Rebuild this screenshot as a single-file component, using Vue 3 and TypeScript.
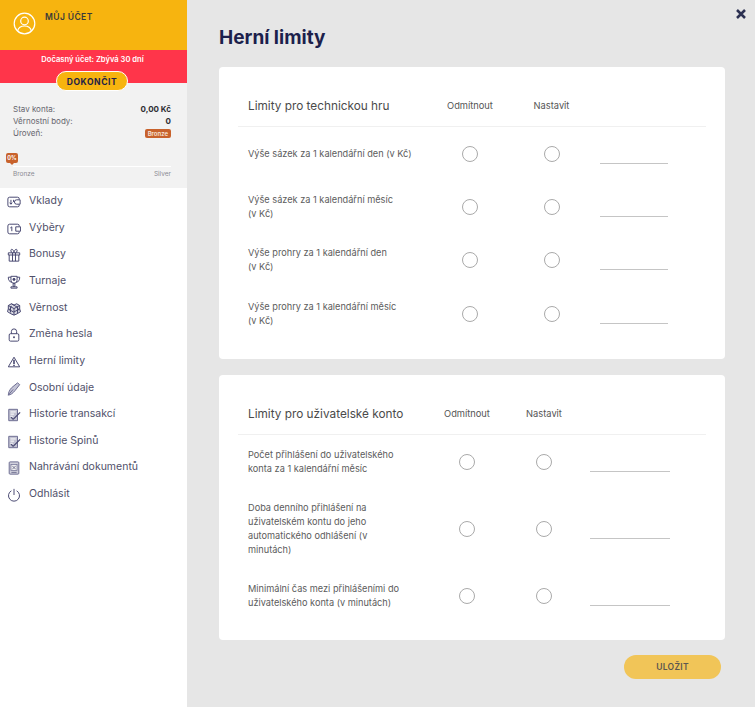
<script setup lang="ts">
const menu = [
  { label: 'Vklady', icon: 'deposit' },
  { label: 'Výběry', icon: 'withdraw' },
  { label: 'Bonusy', icon: 'gift' },
  { label: 'Turnaje', icon: 'trophy' },
  { label: 'Věrnost', icon: 'loyalty' },
  { label: 'Změna hesla', icon: 'lock' },
  { label: 'Herní limity', icon: 'warn' },
  { label: 'Osobní údaje', icon: 'pen' },
  { label: 'Historie transakcí', icon: 'hist' },
  { label: 'Historie Spinů', icon: 'hist' },
  { label: 'Nahrávání dokumentů', icon: 'doc' },
  { label: 'Odhlásit', icon: 'power' },
]
const tech = [
  { label: ['Výše sázek za 1 kalendářní den (v Kč)'], h: 53 },
  { label: ['Výše sázek za 1 kalendářní měsíc', '(v Kč)'], h: 53 },
  { label: ['Výše prohry za 1 kalendářní den', '(v Kč)'], h: 54 },
  { label: ['Výše prohry za 1 kalendářní měsíc', '(v Kč)'], h: 53 },
]
const user = [
  { label: ['Počet přihlášení do uživatelského', 'konta za 1 kalendářní měsíc'], h: 54 },
  { label: ['Doba denního přihlášení na', 'uživatelském kontu do jeho', 'automatického odhlášení (v', 'minutách)'], h: 80 },
  { label: ['Minimální čas mezi přihlášeními do', 'uživatelského konta (v minutách)'], h: 54 },
]
</script>

<template>
  <div class="page">
    <aside class="side">
      <div class="acct">
        <svg class="avatar" width="23" height="23" viewBox="0 0 23 23" fill="none" stroke="#fff" stroke-width="1.2">
          <circle cx="11.5" cy="11.5" r="10.3" />
          <circle cx="11.5" cy="9" r="3.8" />
          <path d="M4.6 19c.8-3.4 3.4-5 6.9-5s6.100 1.600 6.900 5" />
        </svg>
        <span class="acct-t">MŮJ ÚČET</span>
      </div>
      <div class="temp"><span>Dočasný účet: Zbývá 30 dní</span></div>
      <div class="stats">
        <button class="finish">DOKONČIT</button>
        <div class="stat"><span>Stav konta:</span><b>0,00 Kč</b></div>
        <div class="stat"><span>Věrnostní body:</span><b>0</b></div>
        <div class="stat"><span>Úroveň:</span><i class="badge">Bronze</i></div>
        <div class="prog">
          <span class="pct">0%</span>
          <div class="bar"></div>
          <div class="ends"><span>Bronze</span><span>Silver</span></div>
        </div>
      </div>
      <nav class="menu">
        <a v-for="m in menu" :key="m.label" class="item">
          <svg class="ic" width="14" height="14" viewBox="0 0 16 16" fill="none" stroke="#45456e" stroke-width="1.100">
            <template v-if="m.icon === 'deposit'">
              <path d="M14 5V4.500a2 2 0 0 0-2-2H3a2 2 0 0 0-2 2v7a2 2 0 0 0 2 2h9a2 2 0 0 0 2-2V11" />
              <path d="M15 5.500h-4a2.500 2.500 0 0 0 0 5h4zM4.500 5.500v5M3 8.800l1.500 1.700L6 8.800M7.500 5.500v2.500" />
            </template>
            <template v-else-if="m.icon === 'withdraw'">
              <path d="M14 5V4.500a2 2 0 0 0-2-2H3a2 2 0 0 0-2 2v7a2 2 0 0 0 2 2h9a2 2 0 0 0 2-2V11" />
              <path d="M15.500 5.500H10v5h5.500zM5.500 10.500v-5L3.800 6.800" />
            </template>
            <template v-else-if="m.icon === 'gift'">
              <path d="M1.500 5.500h13v2.500h-13zM2.500 8V15h11V8M6.300 5.500V15M9.700 5.500V15M6 5.500C4 4.500 4 1.500 5.500 1.500S8 4 8 5.500c0-1.500 1-4 2.500-4S12 4.500 10 5.500" />
            </template>
            <template v-else-if="m.icon === 'trophy'">
              <path d="M4.500 1.500h7v4.500a3.500 3.500 0 0 1-7 0zM4.500 2.500H1.500c0 3.500 1 5 3.800 5.800M11.500 2.500h3c0 3.500-1 5-3.800 5.800M7 9.500h2V13H7zM4.500 13.500h7V15h-7z" />
              <circle cx="8" cy="5" r="1.200" fill="#45456e" />
            </template>
            <template v-else-if="m.icon === 'loyalty'">
              <path d="M1.500 4 5 2l3 1.500L11 2l3.500 2v4l1 3-4 2.500L8 15l-3.500-1.500-4-2.500 1-3z" fill="#d6d6e0" />
              <path d="M1.500 4 8 7.500 14.500 4M8 7.500V15M5 2l6 3.500M4 6v6M12 6v6.500M1.500 8 7.500 11.500 14.500 8M5 4.500l-2 5M11 4.500l2.500 5" />
            </template>
            <template v-else-if="m.icon === 'lock'">
              <rect x="2.500" y="6.500" width="11" height="8.500" rx="1.500" />
              <path d="M5 6.500V4a3 3 0 0 1 6 0v2.500" />
              <circle cx="8" cy="10.500" r="1.100" fill="#45456e" stroke="none" />
            </template>
            <template v-else-if="m.icon === 'warn'">
              <path d="M8 2.500 14.500 13.500h-13z" stroke-linejoin="round" />
              <path d="M8 5.500v5" stroke-width="1.800" />
              <path d="M8 11.300v1.200" stroke-width="1.800" />
            </template>
            <template v-else-if="m.icon === 'pen'">
              <path d="M1.500 15c0-3 1.500-6 3.800-8.500L12 1l2.500 2-5.500 7C6.500 13 4.500 14.500 1.500 15z" fill="#c4c4d6" stroke="#6a6a90" />
              <path d="M1.500 15 7 8.500" stroke="#6a6a90" />
            </template>
            <template v-else-if="m.icon === 'hist'">
              <path d="M2 1.500h10v13H2z" fill="#c2c2d2" stroke="#6a6a90" />
              <path d="M4 4.500h6M4 7h4M4 9.500h2.500" stroke="#fff" />
              <path d="M7 13 15 5" stroke-width="1.500" />
              <path d="M4.500 10.500 7 13" stroke-width="1.200" />
            </template>
            <template v-else-if="m.icon === 'doc'">
              <rect x="2.500" y="1" width="11" height="14" rx="1" fill="#d0d0dc" stroke="#6a6a90" />
              <rect x="4.500" y="4" width="7" height="7" fill="#f0f0f0" stroke="#6a6a90" stroke-width=".8" />
              <path d="M6 5.500l4 4M10 5.500l-4 4M5 13h6" stroke="#5a5a80" stroke-width=".9" />
            </template>
            <template v-else>
              <path d="M8 1v7" />
              <path d="M5 3.200a6.300 6.300 0 1 0 6 0" />
            </template>
          </svg>
          <span>{{ m.label }}</span>
        </a>
      </nav>
    </aside>

    <main class="main">
      <svg class="close" width="10" height="10" viewBox="0 0 10 10" stroke="#2c3152" stroke-width="2.500">
        <path d="M1 1l8 8M9 1l-8 8" />
      </svg>
      <h1 class="title">Herní limity</h1>

      <section class="card card-a">
        <div class="head grid">
          <span class="h-name">Limity pro technickou hru</span>
          <span class="h-col">Odmítnout</span>
          <span class="h-col">Nastavit</span>
        </div>
        <div v-for="(r, i) in tech" :key="i" class="row grid" :style="{ height: r.h + 'px' }">
          <div class="label"><div v-for="l in r.label" :key="l">{{ l }}</div></div>
          <span class="cell"><i class="radio"></i></span>
          <span class="cell"><i class="radio"></i></span>
          <span class="line"></span>
        </div>
      </section>

      <section class="card card-b">
        <div class="head grid">
          <span class="h-name">Limity pro uživatelské konto</span>
          <span class="h-col">Odmítnout</span>
          <span class="h-col">Nastavit</span>
        </div>
        <div v-for="(r, i) in user" :key="i" class="row grid" :style="{ height: r.h + 'px' }">
          <div class="label"><div v-for="l in r.label" :key="l">{{ l }}</div></div>
          <span class="cell"><i class="radio"></i></span>
          <span class="cell"><i class="radio"></i></span>
          <span class="line"></span>
        </div>
      </section>

      <div class="actions"><button class="save">ULOŽIT</button></div>
    </main>
  </div>
</template>

<style>
html, body { margin: 0; padding: 0; }
</style>

<style scoped>
.page {
  width: 755px;
  height: 707px;
  display: flex;
  overflow: hidden;
  font-family: "Inter", "Liberation Sans", sans-serif;
  background: #e6e6e6;
}
.side { width: 187px; flex: none; background: #fff; display: flex; flex-direction: column; height: 707px; }
.acct { height: 50px; background: #f7b40f; display: flex; align-items: flex-start; padding: 12px 0 0 13px; box-sizing: border-box; gap: 9px; }
.avatar { flex: none; }
.acct-t { font-size: 8.500px; font-weight: 600; color: #3a3a3a; line-height: 10px; letter-spacing: .4px; }
.temp { height: 33px; background: #ff354a; color: #fff; font-size: 7.600px; font-weight: 600; text-align: center; padding: 5px 2px 0 0; box-sizing: border-box; line-height: 10px; }
.stats { position: relative; background: #f2f2f2; height: 105px; padding: 20px 16px 0 13px; box-sizing: border-box; }
.finish {
  position: absolute; left: 56px; top: -12px; width: 72px; height: 20px; border-radius: 10px;
  background: #f7b40f; border: 1px solid #fff; color: #1e2148; font-family: inherit; font-size: 8.500px; font-weight: 700; padding: 2px 0 0; letter-spacing: .6px;
}
.stat { display: flex; justify-content: space-between; align-items: center; height: 12px; font-size: 8px; color: #66666e; }
.stat b { color: #2f2f35; font-weight: 700; }
.badge { background: #c8622c; color: #f7e6dc; font-style: normal; font-size: 6px; font-weight: 600; border-radius: 2px; padding: 1px 3px; line-height: 7px; }
.prog { position: relative; margin-top: 27px; }
.pct { position: absolute; left: -7px; top: -13px; background: #c8622c; color: #fff; font-size: 5.500px; font-weight: 700; width: 12px; height: 10px; line-height: 10px; text-align: center; border-radius: 2px; }
.pct::after { content: ""; position: absolute; left: 4px; top: 10px; border: 2px solid transparent; border-top-color: #c8622c; }
.bar { height: 1px; background: #fff; }
.ends { display: flex; justify-content: space-between; font-size: 6.500px; color: #8b8b93; margin-top: 3px; line-height: 9px; }
.menu { display: flex; flex-direction: column; padding-top: .4px; }
.item { height: 26.640px; display: flex; align-items: center; padding: 0 0 2px 7px; gap: 8px; font-size: 10.500px; color: #50506a; box-sizing: border-box; }
.ic { flex: none; margin-top: 3px; }
.main { position: relative; flex: 1; padding: 0 30px 0 32px; box-sizing: border-box; min-width: 0; }
.close { position: absolute; right: 9px; top: 9px; }
.title { margin: 27px 0 0; font-size: 19px; line-height: 22px; font-weight: 700; color: #1c1f4c; }
.card { background: #fff; border-radius: 4px; }
.card-a { margin-top: 18px; height: 292px; }
.card-b { margin-top: 16px; height: 265px; }
.grid { display: grid; align-items: center; margin: 0 19px; padding-left: 10px; }
.card-a .grid { grid-template-columns: 185px 74px 89px 72px; }
.card-b .grid { grid-template-columns: 185px 68px 86px 83px; }
.head { height: 60px; border-bottom: 1px solid #f0f0f0; box-sizing: border-box; padding-top: 18px; }
.h-name { font-size: 11.800px; color: #4a4a4a; line-height: 14px; white-space: nowrap; }
.h-col { font-size: 9.300px; color: #555; line-height: 12px; white-space: nowrap; text-align: center; }
.label { font-size: 9.200px; line-height: 14px; color: #5c5c5c; white-space: nowrap; }
.cell { display: flex; justify-content: center; }
.radio { display: block; width: 14px; height: 14px; border: 1px solid #aaa; border-radius: 50%; }
.line { height: 1px; background: #c5c5c5; margin-top: 19px; }
.card-a .line { margin-left: 4px; width: 68px; }
.card-b .line { margin-left: 3px; width: 80px; }
.actions { display: flex; justify-content: flex-end; margin-top: 15px; padding-right: 4px; }
.save { width: 97px; height: 24px; border: 0; border-radius: 12px; background: #f1c558; color: #5c5750; font-family: inherit; font-size: 8.500px; font-weight: 600; letter-spacing: .3px; padding: 0; }
</style>
